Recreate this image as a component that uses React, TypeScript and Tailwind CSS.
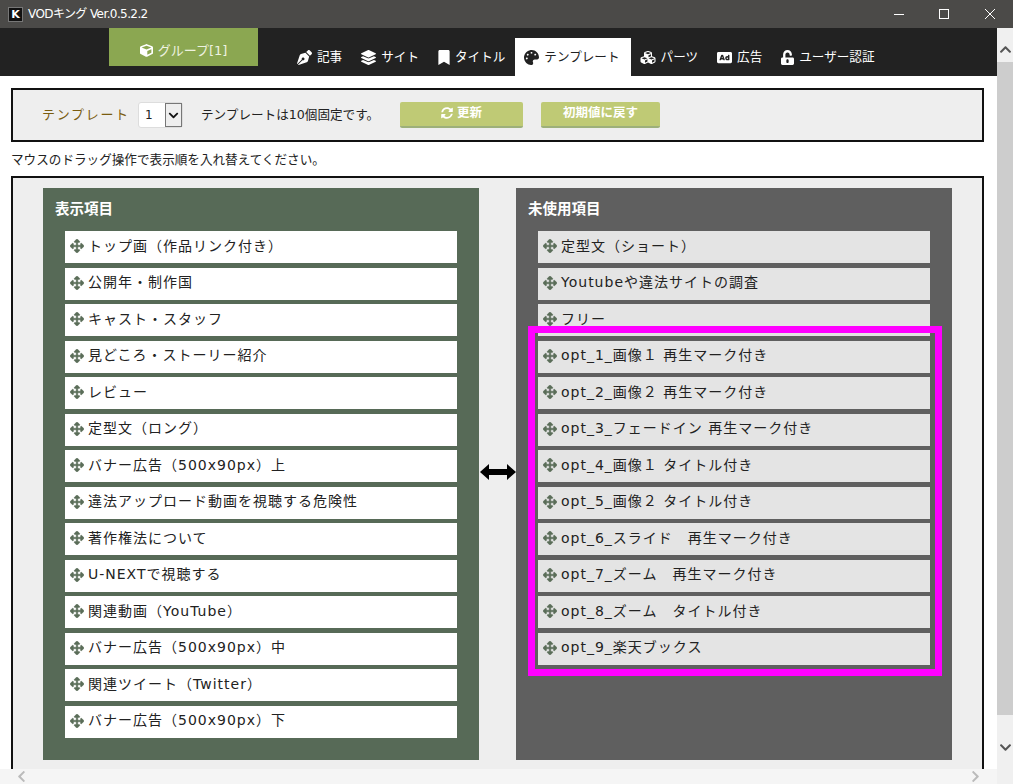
import { ReactNode } from "react";
import {
  FaAd,
  FaArrowsAlt,
  FaBookmark,
  FaChevronDown,
  FaChevronLeft,
  FaChevronRight,
  FaChevronUp,
  FaCube,
  FaCubes,
  FaLayerGroup,
  FaPalette,
  FaPenNib,
  FaSyncAlt,
  FaUnlockAlt,
} from "react-icons/fa";

const FONT = "[font-family:'DejaVu_Sans','Noto_Sans_CJK_JP',sans-serif]";

const shown = [
  "トップ画（作品リンク付き）",
  "公開年・制作国",
  "キャスト・スタッフ",
  "見どころ・ストーリー紹介",
  "レビュー",
  "定型文（ロング）",
  "バナー広告（500x90px）上",
  "違法アップロード動画を視聴する危険性",
  "著作権法について",
  "U-NEXTで視聴する",
  "関連動画（YouTube）",
  "バナー広告（500x90px）中",
  "関連ツイート（Twitter）",
  "バナー広告（500x90px）下",
];

const unused = [
  "定型文（ショート）",
  "Youtubeや違法サイトの調査",
  "フリー",
  "opt_1_画像１ 再生マーク付き",
  "opt_2_画像２ 再生マーク付き",
  "opt_3_フェードイン 再生マーク付き",
  "opt_4_画像１ タイトル付き",
  "opt_5_画像２ タイトル付き",
  "opt_6_スライド　再生マーク付き",
  "opt_7_ズーム　再生マーク付き",
  "opt_8_ズーム　タイトル付き",
  "opt_9_楽天ブックス",
];

function Tab({ icon, label, active }: { icon: ReactNode; label: string; active?: boolean }) {
  return (
    <div
      className={
        active
          ? "flex h-[38px] items-center gap-[5px] bg-white pl-[9px] pr-[11px] text-[12.6px] text-[#222]"
          : "flex h-[38px] items-center gap-[5px] pl-[9px] pr-[10px] text-[12.6px] text-white"
      }
    >
      {icon}
      <span>{label}</span>
    </div>
  );
}

function Item({ label, muted }: { label: string; muted?: boolean }) {
  return (
    <li
      className={
        muted
          ? "flex h-[32px] items-center gap-[4px] bg-[#e4e4e4] pl-[5px] text-[#222]"
          : "flex h-[32px] items-center gap-[4px] bg-white pl-[5px] text-[#222]"
      }
    >
      <FaArrowsAlt className="mb-[2px] h-[14px] w-[14px] shrink-0 stroke-[#5a6d58] stroke-[16] text-[#5a6d58]" />
      <span className="whitespace-pre pb-[2px] text-[14px] tracking-[1px]">{label}</span>
    </li>
  );
}

function Column({ title, items, dark, muted }: { title: string; items: string[]; dark: string; muted?: boolean }) {
  return (
    <div className={`h-[572px] w-[436px] shrink-0 pl-[12px] pt-[12px] ${dark}`}>
      <h2 className="h-[31px] text-[14.5px] font-bold leading-[18px] text-white">{title}</h2>
      <ul className="ml-[10px] flex w-[392px] flex-col gap-[4.5px]">
        {items.map((item) => (
          <Item key={item} label={item} muted={muted} />
        ))}
      </ul>
    </div>
  );
}

export default function App() {
  return (
    <div className={`flex h-[784px] w-[1013px] flex-col overflow-hidden bg-white ${FONT}`}>
      <header className="flex h-[28px] shrink-0 items-center bg-[#4b4a48] pl-[8px] text-[12px] text-white">
        <span className="flex h-[15px] w-[15px] items-center justify-center border border-[#777] bg-[#111] text-[11px] font-bold leading-none">
          K
        </span>
        <span className="ml-[5px] tracking-[-0.6px]">VODキング Ver.0.5.2.2</span>
        <div className="ml-auto flex items-center">
          <span className="h-px w-[10px] bg-white" />
          <span className="ml-[35px] h-[10px] w-[10px] border border-white" />
          <svg className="ml-[36px] mr-[18px] h-[10px] w-[10px]" viewBox="0 0 10 10" stroke="white" fill="none">
            <path d="M0 0l10 10M10 0L0 10" />
          </svg>
        </div>
      </header>

      <div className="flex min-h-0 flex-1">
        <div className="flex w-[997px] flex-col">
          <nav className="flex h-[48px] shrink-0 bg-[#222] pl-[109px] pr-[1px]">
            <div className="flex h-[38px] w-[149px] items-center justify-center gap-[5px] bg-[#8ba751] pt-[7px] text-[13px] text-[#eef2e0]">
              <FaCube className="h-[13px] w-[13px] text-white" />
              <span>グループ[1]</span>
            </div>
            <div className="ml-[30px] mt-[10px] flex">
              <Tab icon={<FaPenNib className="h-[15px] w-[15px]" />} label="記事" />
              <Tab icon={<FaLayerGroup className="h-[15px] w-[15px]" />} label="サイト" />
              <Tab icon={<FaBookmark className="h-[15px] w-[12px]" />} label="タイトル" />
              <Tab active icon={<FaPalette className="h-[15px] w-[15px]" />} label="テンプレート" />
              <Tab icon={<FaCubes className="h-[15px] w-[16px]" />} label="パーツ" />
              <Tab icon={<FaAd className="h-[15px] w-[15px]" />} label="広告" />
              <Tab icon={<FaUnlockAlt className="h-[15px] w-[13px]" />} label="ユーザー認証" />
            </div>
          </nav>

          <main className="min-h-0 flex-1 overflow-hidden px-[11px] pt-[12px]">
            <section className="flex h-[54px] w-[973px] items-center border-2 border-[#111] bg-[#eee] pl-[29px] text-[12.6px] text-[#222]">
              <span className="w-[96px] text-[13px] tracking-[1.7px] text-[#7a5c10]">テンプレート</span>
              <div className="flex h-[26px] w-[45px] items-center rounded-[3px] border border-[#ddd] bg-white pl-[6px] text-[12px]">
                <span className="w-[22px]">1</span>
                <span className="flex h-[24px] w-[19px] items-center justify-center border border-[#777] bg-[#eee]">
                  <FaChevronDown className="h-[11px] w-[11px] text-[#111]" />
                </span>
              </div>
              <span className="ml-[18px] w-[181px] whitespace-nowrap">テンプレートは10個固定です。</span>
              <button className="ml-[18px] flex h-[26px] w-[123px] items-center justify-center gap-[4px] rounded-[2px] border-b-2 border-[#9db07a] bg-[#bfca75] pb-[2px] text-[12.5px] font-bold text-white">
                <FaSyncAlt className="h-[12px] w-[12px]" />
                更新
              </button>
              <button className="ml-[18px] h-[26px] w-[119px] rounded-[2px] border-b-2 border-[#9db07a] bg-[#bfca75] pb-[2px] text-[12.5px] font-bold text-white">
                初期値に戻す
              </button>
            </section>

            <p className="mt-[9px] h-[25px] text-[12.6px] leading-[18px] text-[#222]">
              マウスのドラッグ操作で表示順を入れ替えてください。
            </p>

            <section className="relative flex h-[620px] w-[973px] items-start border-2 border-[#111] bg-[#eee] pl-[30px] pt-[10px]">
              <Column title="表示項目" items={shown} dark="bg-[#576a57]" />
              <div className="flex h-[572px] w-[37px] shrink-0 items-center justify-center pb-[4px]">
                <svg className="h-[16px] w-[36px]" viewBox="0 0 36 16" fill="#000">
                  <path d="M0 8L9 0V5H27V0L36 8L27 16V11H9V16Z" />
                </svg>
              </div>
              <Column title="未使用項目" items={unused} dark="bg-[#5f5f5f]" muted />
              {/* annotation drawn over the list in the screenshot */}
              <div className="absolute left-[515px] top-[148px] h-[350px] w-[414px] border-[7px] border-[#ff00ff]" />
            </section>
          </main>

          <div className="flex h-[15px] shrink-0 items-center justify-between bg-[#f5f5f5] px-[15px] text-[#bbb]">
            <FaChevronLeft className="h-[13px] w-[13px]" />
            <FaChevronRight className="h-[13px] w-[13px]" />
          </div>
        </div>

        <aside className="flex w-[16px] shrink-0 flex-col items-center bg-[#f0f0f0] text-[#555]">
          <div className="flex h-[34px] items-end pb-[6px]">
            <FaChevronUp className="h-[13px] w-[13px]" />
          </div>
          <div className="h-[653px] w-full bg-[#cdcdcd]" />
          <div className="flex h-[64px] items-center">
            <FaChevronDown className="h-[13px] w-[13px]" />
          </div>
        </aside>
      </div>
    </div>
  );
}
